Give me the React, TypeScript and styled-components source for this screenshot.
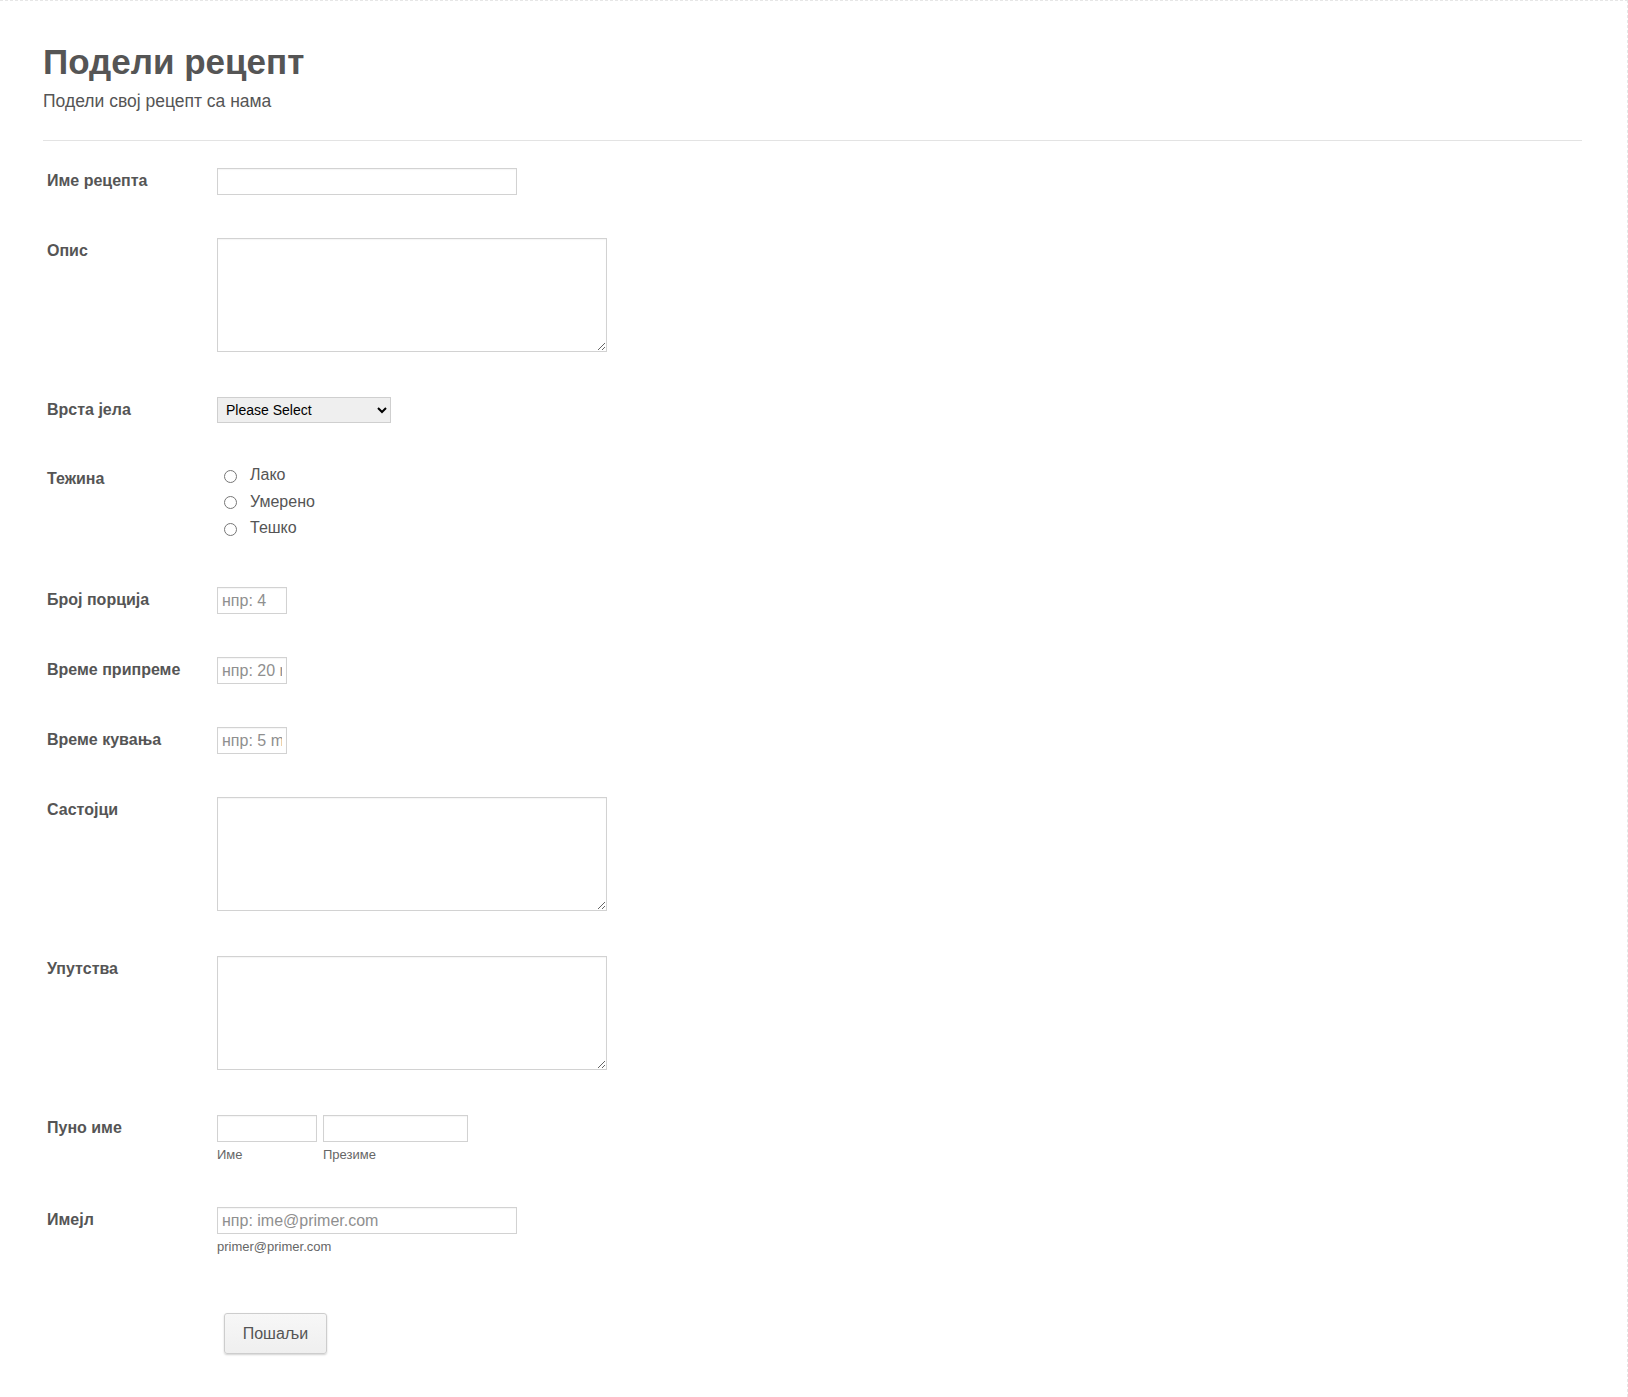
import React from 'react';
import styled, { createGlobalStyle } from 'styled-components';

const GlobalStyle = createGlobalStyle`
  body {
    margin: 0;
    background: #fff;
    font-family: "Liberation Sans", Arial, sans-serif;
    color: #555;
  }
`;

const Frame = styled.div`
  min-height: 100vh;
  box-sizing: border-box;
  border-top: 1px dashed #e6e6e6;
  border-right: 1px dashed #e6e6e6;
  padding: 41px 45px 40px 43px;
`;

const Title = styled.h1`
  margin: 0;
  font-size: 35px;
  line-height: 40px;
  font-weight: bold;
  color: #555;
`;

const Subtitle = styled.div`
  margin-top: 9px;
  font-size: 17.5px;
  line-height: 20px;
  color: #555;
`;

const Divider = styled.hr`
  margin: 29px 0 0;
  border: none;
  border-top: 1px solid #e3e3e3;
`;

const Form = styled.form`
  display: flex;
  flex-direction: column;
  gap: 43px;
  padding-top: 27px;
`;

const Row = styled.div<{ $extraTop?: number }>`
  display: flex;
  align-items: flex-start;
  margin-top: ${(p) => p.$extraTop || 0}px;
`;

const Label = styled.label`
  flex: 0 0 170px;
  padding: 4px 0 0 4px;
  font-size: 16px;
  line-height: 18px;
  font-weight: bold;
  color: #555;
`;

const TextInput = styled.input<{ $width: number }>`
  box-sizing: border-box;
  width: ${(p) => p.$width}px;
  height: 27px;
  margin: 0;
  padding: 0 4px;
  border: 1px solid #d2d2d2;
  box-shadow: inset 0 1px 1px rgba(0, 0, 0, 0.04);
  font-family: "Liberation Sans", Arial, sans-serif;
  font-size: 16px;
  color: #555;
  background: #fff;
  outline: none;

  &::placeholder {
    color: #8f8f8f;
  }
`;

const TextArea = styled.textarea`
  box-sizing: border-box;
  width: 390px;
  height: 114px;
  margin: 0 0 2px;
  padding: 4px;
  border: 1px solid #d2d2d2;
  box-shadow: inset 0 1px 1px rgba(0, 0, 0, 0.04);
  font-family: "Liberation Sans", Arial, sans-serif;
  font-size: 15px;
  display: block;
`;

const Select = styled.select`
  box-sizing: border-box;
  width: 174px;
  height: 26px;
  margin: 0;
  padding: 0 2px 0 4px;
  border: 1px solid #cfcfcf;
  background-color: #efefef;
  font-family: "Liberation Sans", Arial, sans-serif;
  font-size: 14px;
  color: #000;
`;

const RadioList = styled.div`
  display: flex;
  flex-direction: column;
  margin-top: -4px;
  padding-bottom: 2.5px;
`;

const RadioItem = styled.label`
  display: flex;
  align-items: center;
  height: 26.5px;
  font-size: 16px;
  color: #555;
`;

const Radio = styled.input`
  width: 13px;
  height: 13px;
  margin: 2px 13px 0 7px;
`;

const FieldGroup = styled.div`
  display: flex;
  gap: 6px;
`;

const FieldStack = styled.div`
  display: flex;
  flex-direction: column;
`;

const SubLabel = styled.span`
  margin-top: 4px;
  font-size: 13px;
  line-height: 18px;
  color: #666;
`;

const SubmitButton = styled.button`
  box-sizing: border-box;
  width: 103px;
  height: 41px;
  margin-left: 7px;
  border: 1px solid #cdcdcd;
  border-radius: 3px;
  background: linear-gradient(#f7f7f7, #efefef);
  box-shadow: 0 1px 2px rgba(0, 0, 0, 0.18);
  font-family: "Liberation Sans", Arial, sans-serif;
  font-size: 16px;
  color: #555;
  cursor: pointer;
`;

const difficulties = ['Лако', 'Умерено', 'Тешко'];

const timeFields = [
  { label: 'Број порција', placeholder: 'нпр: 4' },
  { label: 'Време припреме', placeholder: 'нпр: 20 min' },
  { label: 'Време кувања', placeholder: 'нпр: 5 min' },
];

const App: React.FC = () => {
  return (
    <>
      <GlobalStyle />
      <Frame>
        <Title>Подели рецепт</Title>
        <Subtitle>Подели свој рецепт са нама</Subtitle>
        <Divider />
        <Form onSubmit={(e) => e.preventDefault()}>
          <Row>
            <Label>Име рецепта</Label>
            <TextInput type="text" $width={300} />
          </Row>
          <Row>
            <Label>Опис</Label>
            <TextArea />
          </Row>
          <Row>
            <Label>Врста јела</Label>
            <Select defaultValue="">
              <option value="">Please Select</option>
              <option>Предјело</option>
              <option>Главно јело</option>
              <option>Десерт</option>
            </Select>
          </Row>
          <Row>
            <Label>Тежина</Label>
            <RadioList>
              {difficulties.map((d) => (
                <RadioItem key={d}>
                  <Radio type="radio" name="difficulty" />
                  {d}
                </RadioItem>
              ))}
            </RadioList>
          </Row>
          {timeFields.map(({ label, placeholder }) => (
            <Row key={label}>
              <Label>{label}</Label>
              <TextInput type="text" $width={70} placeholder={placeholder} />
            </Row>
          ))}
          <Row>
            <Label>Састојци</Label>
            <TextArea />
          </Row>
          <Row>
            <Label>Упутства</Label>
            <TextArea />
          </Row>
          <Row>
            <Label>Пуно име</Label>
            <FieldGroup>
              <FieldStack>
                <TextInput type="text" $width={100} />
                <SubLabel>Име</SubLabel>
              </FieldStack>
              <FieldStack>
                <TextInput type="text" $width={145} />
                <SubLabel>Презиме</SubLabel>
              </FieldStack>
            </FieldGroup>
          </Row>
          <Row>
            <Label>Имејл</Label>
            <FieldStack>
              <TextInput type="email" $width={300} placeholder="нпр: ime@primer.com" />
              <SubLabel>primer@primer.com</SubLabel>
            </FieldStack>
          </Row>
          <Row $extraTop={14}>
            <Label as="span" />
            <SubmitButton type="submit">Пошаљи</SubmitButton>
          </Row>
        </Form>
      </Frame>
    </>
  );
};

export default App;
